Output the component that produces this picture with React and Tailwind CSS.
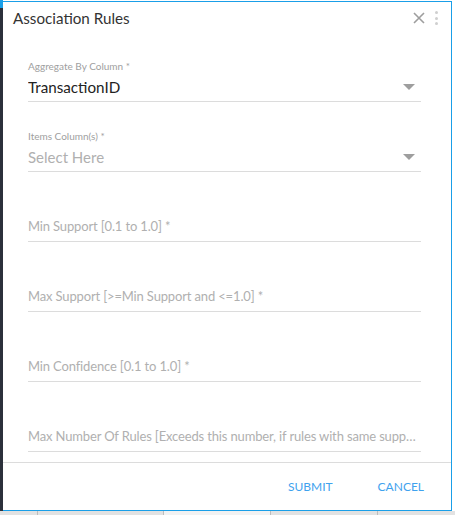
import React from 'react';

const font = { fontFamily: 'Lato, "Open Sans", sans-serif' };

function Caret() {
  return (
    <svg width="12" height="6" viewBox="0 0 12 6" className="shrink-0">
      <path d="M0 0 L12 0 L6 6 Z" fill="#9e9e9e" />
    </svg>
  );
}

function Field({ label, value, placeholder, select }) {
  return (
    <div className="h-[70px] flex flex-col justify-end">
      {label && <div className="text-[10px] leading-[14px] text-[#a0a0a0] mb-[2px]">{label}</div>}
      <div className="h-[27px] flex items-center gap-3 border-b border-[#dcdcdc] pb-[2px]">
        <div
          className={`flex-1 min-w-0 truncate ${
            value
              ? 'text-[15.2px] text-[#222]'
              : select
              ? 'text-[15px] text-[#b0b0b0]'
              : 'text-[13px] tracking-[-0.15px] text-[#b0b0b0]'
          }`}
        >
          {value || placeholder}
        </div>
        {select && <div className="pr-[6px]"><Caret /></div>}
      </div>
    </div>
  );
}

export default function App() {
  return (
    <div className="w-[455px] h-[515px] bg-white flex flex-col overflow-hidden" style={font}>
      <div className="flex flex-1 min-h-0">
        {/* left app strip */}
        <div className="w-[3px] flex flex-col">
          <div className="h-[8px] bg-[#1a9fe8]" />
          <div className="flex-1 bg-[#2b303b]" />
        </div>

        {/* dialog */}
        <div className="w-[449px] mt-px border-t border-r border-b border-[#1a9fe8] flex flex-col bg-white">
          <div className="h-[30px] pt-[6px] pl-[10px] pr-[13px] flex items-start">
            <div className="flex-1 text-[15.2px] leading-[20px] text-[#333]">Association Rules</div>
            <div className="flex items-center gap-[10px] h-[20px]">
              <svg width="12" height="12" viewBox="0 0 12 12">
                <path d="M1 1 L11 11 M11 1 L1 11" stroke="#9e9e9e" strokeWidth="1.6" />
              </svg>
              <div className="flex flex-col gap-[2.5px]">
                <span className="w-[3px] h-[3px] rounded-full bg-[#cfcfcf]" />
                <span className="w-[3px] h-[3px] rounded-full bg-[#cfcfcf]" />
                <span className="w-[3px] h-[3px] rounded-full bg-[#cfcfcf]" />
              </div>
            </div>
          </div>

          <div className="pl-[25px] pr-[30px]">
            <Field label="Aggregate By Column *" value="TransactionID" select />
            <Field label="Items Column(s) *" placeholder="Select Here" select />
            <Field placeholder="Min Support [0.1 to 1.0] *" />
            <Field placeholder="Max Support [>=Min Support and <=1.0] *" />
            <Field placeholder="Min Confidence [0.1 to 1.0] *" />
            <Field placeholder="Max Number Of Rules [Exceeds this number, if rules with same support and confidence]" />
          </div>

          <div className="mt-[10px] border-t border-[#dcdcdc] flex-1 flex items-center justify-end pr-[27px] gap-[45px]">
            <button className="text-[12px] text-[#3fa2ee]">SUBMIT</button>
            <button className="text-[12px] text-[#3fa2ee]">CANCEL</button>
          </div>
        </div>

        {/* right edge */}
        <div className="flex-1 bg-white" />
      </div>

      {/* underlying grid strip */}
      <div className="h-[4px] bg-[#e2e2e2] flex">
        <div className="w-[38px] border-r border-[#bdbdbd]" />
        <div className="w-[126px] border-r border-[#bdbdbd]" />
        <div className="w-[107px] bg-[#f2f2f2] border-r border-[#bdbdbd]" />
        <div className="w-[107px] border-r border-[#bdbdbd]" />
        <div className="flex-1" />
      </div>
    </div>
  );
}
